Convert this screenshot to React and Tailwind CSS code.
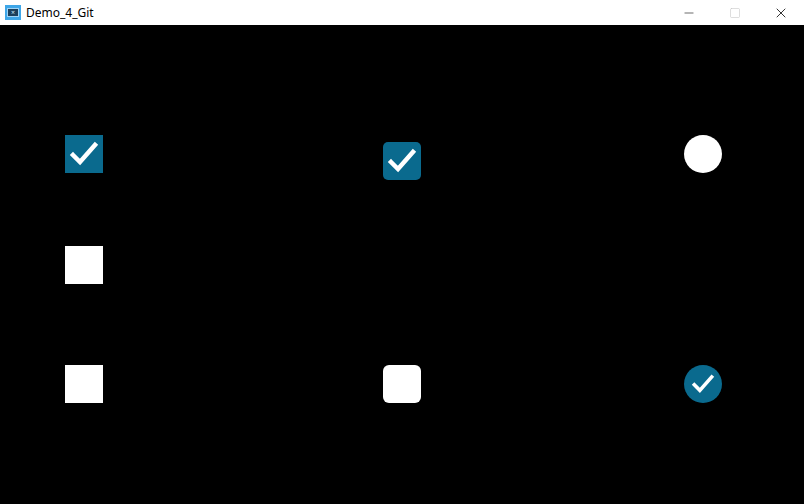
import { Minus, Square, X } from "lucide-react";

function Check({ className = "" }) {
  return (
    <svg className={className} viewBox="0 0 38 38" fill="none">
      <path
        d="M8 20l7 7L30 10"
        stroke="white"
        strokeWidth={4.5}
        strokeLinecap="square"
        strokeLinejoin="miter"
      />
    </svg>
  );
}

function AppIcon() {
  return (
    <div className="flex h-[15px] w-[16px] items-center justify-center bg-[#3ea6e8]">
      <div className="flex h-[9px] w-[12px] items-center justify-center border border-[#9fd3f5] bg-[#1b3f5c]">
        <span className="text-[7px] leading-none text-[#cfe9fb]">×</span>
      </div>
    </div>
  );
}

export default function App() {
  return (
    <div className="flex h-[504px] w-[804px] flex-col bg-black font-['Segoe_UI','Noto_Sans',sans-serif]">
      <div className="flex h-[25px] shrink-0 items-center bg-white pl-[5px]">
        <AppIcon />
        <span className="ml-[5px] text-[12px] text-black">Demo_4_Git</span>
        <div className="ml-auto flex h-full items-center">
          <div className="flex h-full w-[46px] items-center justify-center">
            <Minus className="h-[14px] w-[14px] text-black" strokeWidth={1} />
          </div>
          <div className="flex h-full w-[46px] items-center justify-center">
            <Square className="h-[12px] w-[12px] text-[#c8c8c8]" strokeWidth={1.2} />
          </div>
          <div className="flex h-full w-[46px] items-center justify-center">
            <X className="h-[16px] w-[16px] text-black" strokeWidth={1.2} />
          </div>
        </div>
      </div>

      <div className="grid grid-cols-[318px_301px_1fr] pl-[65px] pt-[110px]">
        <div className="flex flex-col">
          <div className="flex h-[38px] w-[38px] items-center justify-center bg-[#0a6a8e]">
            <Check className="h-[38px] w-[38px]" />
          </div>
          <div className="mt-[73px] h-[38px] w-[38px] bg-white" />
          <div className="mt-[81px] h-[38px] w-[38px] bg-white" />
        </div>
        <div className="flex flex-col">
          <div className="mt-[7px] flex h-[38px] w-[38px] items-center justify-center rounded-[5px] bg-[#0a6a8e]">
            <Check className="h-[38px] w-[38px]" />
          </div>
          <div className="mt-[185px] h-[38px] w-[38px] rounded-[6px] bg-white" />
        </div>
        <div className="flex flex-col">
          <div className="h-[38px] w-[38px] rounded-full bg-white" />
          <div className="mt-[192px] flex h-[38px] w-[38px] items-center justify-center rounded-full bg-[#0a6a8e]">
            <Check className="h-[30px] w-[30px]" />
          </div>
        </div>
      </div>
    </div>
  );
}
